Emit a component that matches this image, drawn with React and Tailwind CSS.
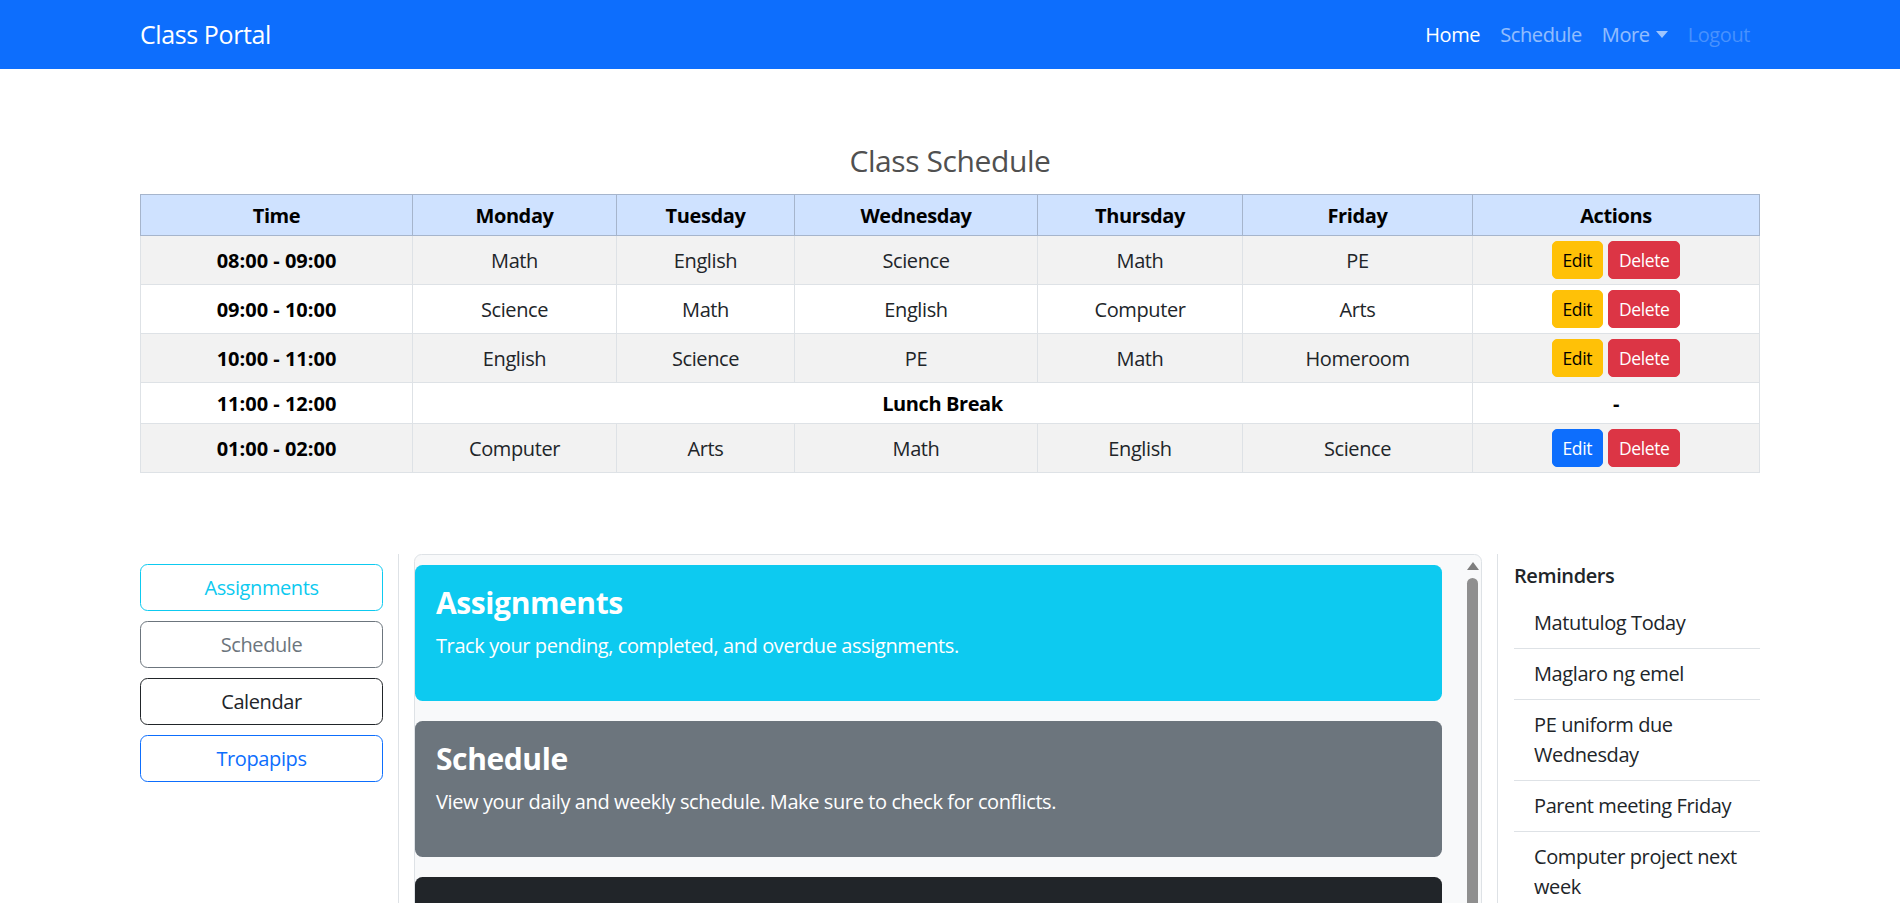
import React from "react";

const rows = [
  { time: "08:00 - 09:00", subjects: ["Math", "English", "Science", "Math", "PE"], edit: "warning" },
  { time: "09:00 - 10:00", subjects: ["Science", "Math", "English", "Computer", "Arts"], edit: "warning" },
  { time: "10:00 - 11:00", subjects: ["English", "Science", "PE", "Math", "Homeroom"], edit: "warning" },
  { time: "11:00 - 12:00", lunch: true },
  { time: "01:00 - 02:00", subjects: ["Computer", "Arts", "Math", "English", "Science"], edit: "primary" },
];

const reminders = [
  "Matutulog Today",
  "Maglaro ng emel",
  "PE uniform due Wednesday",
  "Parent meeting Friday",
  "Computer project next week",
  "Bring art materials",
];

function ActionButtons({ kind }) {
  return (
    <div className="flex items-center justify-center gap-[5px]">
      <button
        className={
          kind === "primary"
            ? "h-[38px] rounded-[5px] border border-[#0d6efd] bg-[#0d6efd] px-[10px] text-[17.5px] leading-[1.5] text-white"
            : "h-[38px] rounded-[5px] border border-[#ffc107] bg-[#ffc107] px-[10px] text-[17.5px] leading-[1.5] text-black"
        }
      >
        Edit
      </button>
      <button className="h-[38px] rounded-[5px] border border-[#dc3545] bg-[#dc3545] px-[10px] text-[17.5px] leading-[1.5] text-white">
        Delete
      </button>
    </div>
  );
}

export default function App() {
  return (
    <div className="bg-white font-['Open_Sans',sans-serif] text-[20px] leading-[1.5] tracking-[-0.02em] text-[#212529]">
      <nav className="h-[69px] bg-[#0d6efd]">
        <div className="mx-[140px] flex h-full items-center justify-between">
          <span className="text-[25px] text-white">Class Portal</span>
          <ul className="flex items-center">
            <li className="px-[10px] text-white">Home</li>
            <li className="px-[10px] text-white/55">Schedule</li>
            <li className="flex items-center px-[10px] text-white/55">
              More
              <span className="ml-[6px] inline-block h-0 w-0 border-x-[6px] border-t-[7px] border-x-transparent border-t-white/60"></span>
            </li>
            <li className="px-[10px] text-white/25">Logout</li>
          </ul>
        </div>
      </nav>

      <main className="mx-[140px]">
        <h4 className="mt-[74px] mb-[15px] text-center text-[30px] font-medium leading-[1.2] text-[#505050]">
          Class Schedule
        </h4>

        <table className="w-full table-fixed border-collapse text-center">
          <colgroup>
            <col className="w-[272px]" />
            <col className="w-[204px]" />
            <col className="w-[178px]" />
            <col className="w-[243px]" />
            <col className="w-[205px]" />
            <col className="w-[230px]" />
            <col />
          </colgroup>
          <thead>
            <tr className="h-[41px] bg-[#cfe2ff]">
              {["Time", "Monday", "Tuesday", "Wednesday", "Thursday", "Friday", "Actions"].map((h) => (
                <th key={h} className="border border-[#a6b5cc] px-[5px] pt-[6px] pb-[4px] font-bold text-black">
                  {h}
                </th>
              ))}
            </tr>
          </thead>
          <tbody>
            {rows.map((r, i) => (
              <tr
                key={r.time}
                className={(i % 2 === 0 ? "bg-[#f2f2f2] " : "bg-white ") + (r.lunch ? "h-[41px]" : "h-[49px]")}
              >
                <td className="border border-[#dee2e6] px-[5px] pt-[6px] pb-[4px] font-bold tracking-normal text-black">{r.time}</td>
                {r.lunch ? (
                  <>
                    <td colSpan={5} className="border border-[#dee2e6] px-[5px] pt-[6px] pb-[4px] font-bold text-black">
                      Lunch Break
                    </td>
                    <td className="border border-[#dee2e6] px-[5px] pt-[6px] pb-[4px] font-bold text-black">-</td>
                  </>
                ) : (
                  <>
                    {r.subjects.map((s, j) => (
                      <td key={j} className="border border-[#dee2e6] px-[5px] pt-[6px] pb-[4px]">
                        {s}
                      </td>
                    ))}
                    <td className="border border-[#dee2e6] px-[5px] py-[5px]">
                      <ActionButtons kind={r.edit} />
                    </td>
                  </>
                )}
              </tr>
            ))}
          </tbody>
        </table>

        <section className="mt-[81px] flex">
          <aside className="flex w-[259px] shrink-0 flex-col gap-[10px] border-r border-[#dee2e6] pt-[10px] pr-[15px]">
            <button className="h-[47px] rounded-[7.5px] border border-[#0dcaf0] text-[#0dcaf0]">Assignments</button>
            <button className="h-[47px] rounded-[7.5px] border border-[#6c757d] text-[#6c757d]">Schedule</button>
            <button className="h-[47px] rounded-[7.5px] border border-[#212529] text-[#212529]">Calendar</button>
            <button className="h-[47px] rounded-[7.5px] border border-[#0d6efd] text-[#0d6efd]">Tropapips</button>
          </aside>

          <div className="ml-[15px] flex h-[560px] w-[1068px] shrink-0 overflow-hidden rounded-[7.5px] border border-[#dee2e6] bg-[#f8f9fa]">
            <div className="flex w-[1027px] shrink-0 flex-col gap-[20px] pt-[10px]">
              <div className="rounded-[7.5px] bg-[#0dcaf0] px-[21px] pt-[20px] pb-[40px] text-white">
                <h3 className="mb-[10px] text-[30px] font-bold leading-[1.2]">Assignments</h3>
                <p>Track your pending, completed, and overdue assignments.</p>
              </div>
              <div className="rounded-[7.5px] bg-[#6c757d] px-[21px] pt-[20px] pb-[40px] text-white">
                <h3 className="mb-[10px] text-[30px] font-bold leading-[1.2]">Schedule</h3>
                <p>View your daily and weekly schedule. Make sure to check for conflicts.</p>
              </div>
              <div className="rounded-[7.5px] bg-[#212529] px-[21px] pt-[20px] pb-[40px] text-white">
                <h3 className="mb-[10px] text-[30px] font-bold leading-[1.2]">Calendar</h3>
                <p>See upcoming events, holidays, and important school dates.</p>
              </div>
            </div>
            <div className="flex-1"></div>
            <div className="flex w-[17px] shrink-0 flex-col items-center pt-[7px]">
              <span className="inline-block h-0 w-0 border-x-[6px] border-b-[8px] border-x-transparent border-b-[#7d7d7d]"></span>
              <div className="mt-[8px] h-[470px] w-[11px] rounded-full bg-[#8f8f8f]"></div>
            </div>
          </div>

          <aside className="ml-[15px] flex-1 border-l border-[#dee2e6] pt-[10px] pl-[16px]">
            <h6 className="mb-[10px] text-[20px] font-semibold leading-[1.2] text-[#212529]">Reminders</h6>
            <ul>
              {reminders.map((r) => (
                <li key={r} className="border-b border-[#dee2e6] px-[20px] py-[10px]">
                  {r}
                </li>
              ))}
            </ul>
          </aside>
        </section>
      </main>
    </div>
  );
}
